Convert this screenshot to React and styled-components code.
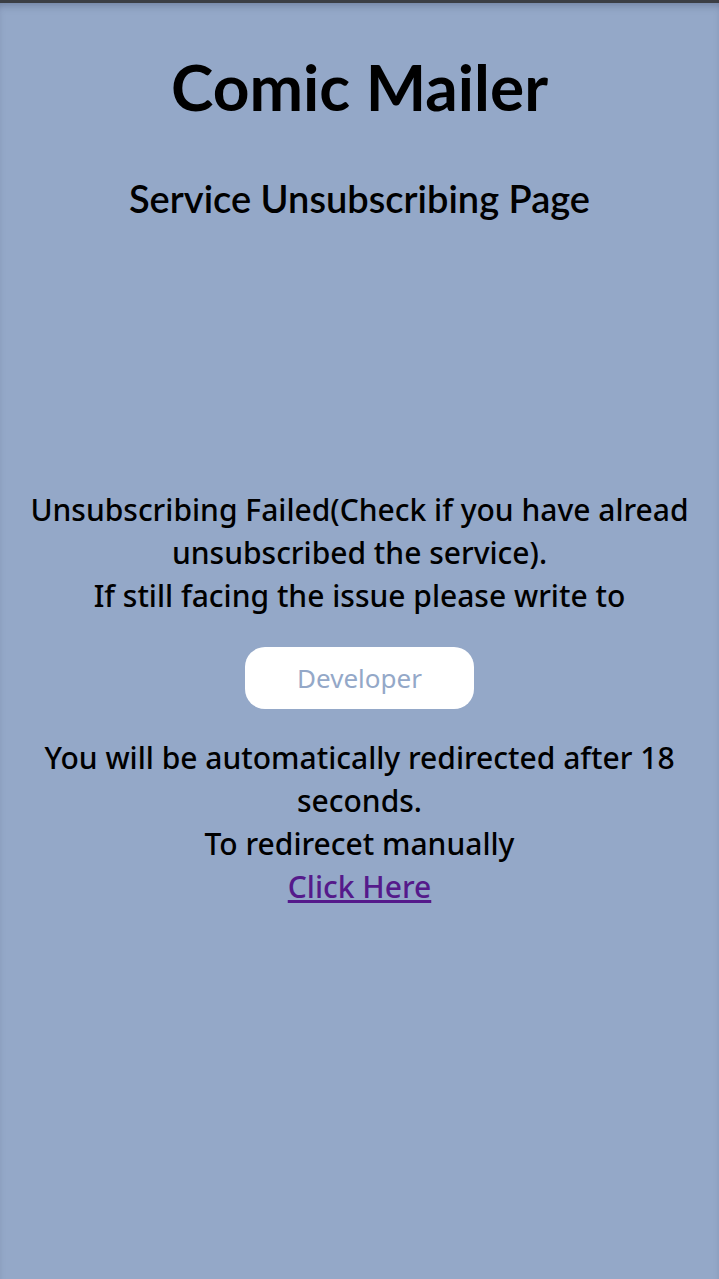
import React from 'react';
import styled, { createGlobalStyle } from 'styled-components';

const GlobalStyle = createGlobalStyle`
    html, body {
        margin: 0;
        padding: 0;
        background: #94a8c8;
    }
    body {
        font-family: "Noto Sans", Lato, sans-serif;
    }
`;

const Page = styled.div`
    min-height: 1279px;
    box-sizing: border-box;
    background: #94a8c8;
    border-top: 3px solid #3b3e44;
    box-shadow: inset 0 6px 8px -4px rgba(40, 50, 80, 0.35);
    display: flex;
    flex-direction: column;
    align-items: center;
    text-align: center;
    color: #000;
    padding: 0 14px;
`;

const Title = styled.h1`
    margin: 44px 0 0;
    font-family: Lato, sans-serif;
    font-size: 64px;
    font-weight: 700;
    line-height: 80px;
`;

const Subtitle = styled.h2`
    margin: 48px 0 0;
    font-family: Lato, sans-serif;
    font-size: 38px;
    font-weight: 600;
    line-height: 46px;
`;

const Message = styled.p`
    margin: ${props => props.top}px 0 0;
    font-size: 30px;
    font-weight: 500;
    line-height: 43px;
`;

const Button = styled.a`
    display: flex;
    align-items: center;
    justify-content: center;
    margin-top: 30px;
    width: 229px;
    height: 62px;
    border-radius: 20px;
    background: #fff;
    color: #94a8c8;
    font-size: 26px;
    font-weight: 400;
    text-decoration: none;
    cursor: pointer;
`;

const Link = styled.a`
    color: #551a8b;
    text-decoration: underline;
    cursor: pointer;
`;

const App = () => {
    return (
        <>
            <GlobalStyle />
            <Page>
                <Title>Comic Mailer</Title>
                <Subtitle>Service Unsubscribing Page</Subtitle>
                <Message top={267}>
                    Unsubscribing Failed(Check if you have alread unsubscribed the service).
                    <br />
                    If still facing the issue please write to
                </Message>
                <Button>Developer</Button>
                <Message top={27}>
                    You will be automatically redirected after 18 seconds.
                    <br />
                    To redirecet manually
                    <br />
                    <Link>Click Here</Link>
                </Message>
            </Page>
        </>
    );
};

export default App;
